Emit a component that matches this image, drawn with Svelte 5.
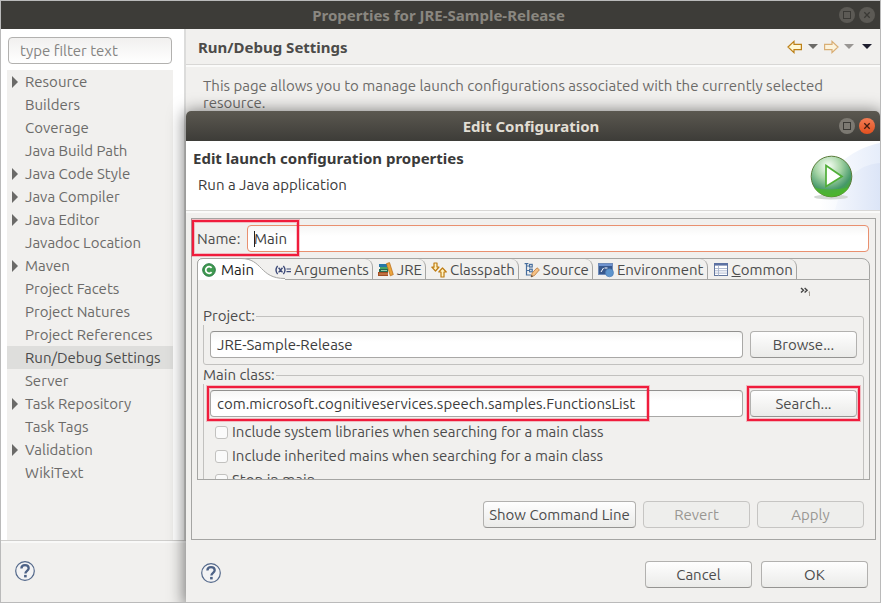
<script>
  const tree = [
    { label: 'Resource', branch: true },
    { label: 'Builders' },
    { label: 'Coverage' },
    { label: 'Java Build Path' },
    { label: 'Java Code Style', branch: true },
    { label: 'Java Compiler', branch: true },
    { label: 'Java Editor', branch: true },
    { label: 'Javadoc Location' },
    { label: 'Maven', branch: true },
    { label: 'Project Facets' },
    { label: 'Project Natures' },
    { label: 'Project References' },
    { label: 'Run/Debug Settings' },
    { label: 'Server' },
    { label: 'Task Repository', branch: true },
    { label: 'Task Tags' },
    { label: 'Validation', branch: true },
    { label: 'WikiText' }
  ];
  const tabs = ['Arguments', 'JRE', 'Classpath', 'Source', 'Environment', 'Common'];

  let selected = $state('Run/Debug Settings');
  let activeTab = $state('Main');
  let name = $state('Main');
  let project = $state('JRE-Sample-Release');
  let mainClass = $state('com.microsoft.cognitiveservices.speech.samples.FunctionsList');
  let filter = $state('');
</script>

{#snippet windowButtons(active)}
  <div class="wm">
    <button class="wm-btn" class:lit={active} aria-label="Maximize">
      <svg viewBox="0 0 16 16"><rect x="4.5" y="4.5" width="7" height="7" fill="none" stroke="currentColor" /></svg>
    </button>
    <button class="wm-btn" class:close={active} aria-label="Close">
      <svg viewBox="0 0 16 16"><path d="M5.3 5.3l5.4 5.4M10.7 5.3l-5.4 5.4" fill="none" stroke="currentColor" stroke-width="1.3" /></svg>
    </button>
  </div>
{/snippet}

{#snippet help()}
  <button class="help" aria-label="Help">
    <svg viewBox="0 0 20 20">
      <circle cx="10" cy="10" r="9.3" fill="#f3f3f4" stroke="#53688a" stroke-width="1.2" />
      <path d="M6.4 7.6C6.4 5.2 8 4.2 10 4.2c2.2 0 3.7 1.2 3.7 3.1 0 2.6-3.3 2.6-3.3 5.2" fill="none" stroke="#4d6286" stroke-width="2.3" />
      <rect x="9.1" y="13.9" width="2.6" height="2.5" fill="#4d6286" />
    </svg>
  </button>
{/snippet}

{#snippet tabIcon(kind)}
  <svg class="ticon" viewBox="0 0 16 16" aria-hidden="true">
    {#if kind === 'Arguments'}
      <g fill="none" stroke="#3d4a78" stroke-width="1.4">
        <path d="M2.6 3.8Q-.6 8 2.6 12.2M8.4 3.8Q11.6 8 8.4 12.2M3.6 5.8l3.9 4.6M7.5 5.8l-3.9 4.6" />
        <path d="M11.5 7h4.5M11.5 9.6h4.5" stroke-width="1.1" />
      </g>
    {:else if kind === 'JRE'}
      <path d="M1 2h8v3H1z" fill="#2677a8" /><path d="M2 5h8v2H2z" fill="#48a465" />
      <path d="M1 7h9v3H1z" fill="#246b50" /><path d="M3 8.5h6" stroke="#9ad0b0" />
      <path d="M0 10h10v4H0z" fill="#a24e24" /><path d="M1 12h9" stroke="#dc9560" />
      <path d="M8.5 1.6l3-1 3.8 12-3 1.2z" fill="#eda53c" stroke="#b66a15" stroke-width=".7" />
    {:else if kind === 'Classpath'}
      <g fill="#fff3c4" stroke="#bf7c12" stroke-width="1.2" stroke-linejoin="round">
        <path d="M3 1h3v4h2L4.5 9 .8 5.2H3z" /><path d="M10 15v-5H7.8L11.5 6l3.8 4H13v5z" />
      </g>
    {:else if kind === 'Source'}
      <g fill="none" stroke="#486f9e" stroke-width="1.2">
        <path d="M2.5 1v12H7M2.5 4H5M2.5 8.5H5" /><rect x="5.6" y="2.4" width="2.6" height="2.6" /><rect x="5.6" y="7.2" width="2.6" height="2.6" />
        <path d="M.6 1.6h3.8" />
      </g>
      <path d="M7 15l1.2-4L13 5.8l2.4 2L10.6 13.4z" fill="#f5c185" stroke="#b8793b" stroke-width=".8" />
      <path d="M7 15l.6-2 1.6 1.2z" fill="#444" />
    {:else if kind === 'Environment'}
      <rect x=".5" y="1.5" width="14" height="11" fill="#38588d" stroke="#6f8bb8" />
      <path d="M1 2h13v2H1z" fill="#6f93cf" /><path d="M3 10l2.5-4M6.5 6h3" stroke="#fff" fill="none" />
      <circle cx="11.5" cy="10.8" r="4" fill="#5d94cc" stroke="#4a7db6" stroke-width=".7" />
    {:else}
      <rect x="1.5" y="1.5" width="13" height="12" fill="#fff" stroke="#63779e" />
      <path d="M1 1h14v2.6H1z" fill="#5c71a2" />
      <path d="M5.5 3.5v10M2 6.5h12M2 8.8h12M2 11.1h12" stroke="#a9b4cc" stroke-width=".9" fill="none" />
    {/if}
  </svg>
{/snippet}

<div class="window">
  <header class="titlebar">
    <h1>Properties for JRE-Sample-Release</h1>
    {@render windowButtons(false)}
  </header>

  <div class="columns">
    <aside>
      <div class="nav">
        <input class="filter" type="text" placeholder="type filter text" aria-label="Filter" bind:value={filter} />
        <ul class="tree">
          {#each tree as item}
            <li>
              <button class:selected={selected === item.label} onclick={() => (selected = item.label)}>
                <span class="twist" class:branch={item.branch}></span>{item.label}
              </button>
            </li>
          {/each}
        </ul>
      </div>
      <div class="aside-foot">{@render help()}</div>
    </aside>

    <main>
      <div class="page-head">
        <h2>Run/Debug Settings</h2>
        <div class="history">
          <button aria-label="Back"><svg width="16" height="14" viewBox="0 0 16 14"><path d="M1 7l6-5.6v3h7.4v5.2H7v3z" fill="#fff8d4" stroke="#bd8118" stroke-width="1.2" /></svg></button>
          <button aria-label="Back history"><svg width="10" height="6" viewBox="0 0 10 6"><path d="M0 0h10L5 5z" fill="#6c6a67" /></svg></button>
          <button aria-label="Forward"><svg width="16" height="14" viewBox="0 0 16 14"><path d="M15 7L9 1.4v3H1.6v5.2H9v3z" fill="#fcf3dc" stroke="#d9ae74" stroke-width="1.2" /></svg></button>
          <button aria-label="Forward history"><svg width="10" height="6" viewBox="0 0 10 6"><path d="M0 0h10L5 5z" fill="#999693" /></svg></button>
          <button aria-label="View menu"><svg width="10" height="6" viewBox="0 0 10 6"><path d="M0 0h10L5 5z" fill="#1e1e2e" /></svg></button>
        </div>
      </div>
      <p>This page allows you to manage launch configurations associated with the currently selected resource.</p>
    </main>
  </div>

  <section class="dialog" role="dialog" aria-labelledby="dlg-title">
    <header class="titlebar active">
      <h1 id="dlg-title">Edit Configuration</h1>
      {@render windowButtons(true)}
    </header>

    <div class="banner">
      <div>
        <h2>Edit launch configuration properties</h2>
        <p>Run a Java application</p>
      </div>
      <svg class="run" width="75" height="69" viewBox="0 0 75 69" aria-hidden="true">
        <defs>
          <radialGradient id="ball" cx=".42" cy=".25" r=".8">
            <stop offset="0" stop-color="#fafff8" /><stop offset=".4" stop-color="#a5d4a5" />
            <stop offset=".75" stop-color="#46986a" /><stop offset="1" stop-color="#40b41c" />
          </radialGradient>
          <linearGradient id="sky"><stop offset=".2" stop-color="#fff" /><stop offset="1" stop-color="#e6edfa" /></linearGradient>
          <linearGradient id="sky2"><stop offset="0" stop-color="#f4f7fd" /><stop offset="1" stop-color="#dce5f7" /></linearGradient>
        </defs>
        <path d="M0 69C20 30 45 8 75 2v67z" fill="url(#sky)" />
        <path d="M30 69C38 38 52 24 75 22v47z" fill="url(#sky2)" />
        <ellipse cx="26" cy="56" rx="17" ry="2.5" fill="#d2d8d4" />
        <circle cx="26.5" cy="35.5" r="20.3" fill="url(#ball)" stroke="#5b7c3b" />
        <path d="M9 46.500c10 3 25 2 35 0-8 12-26 13-35 0z" fill="#4fb928" opacity=".7" />
        <path d="M21 24.500l16 11-16 10z" fill="#fff" stroke="#50ae38" stroke-width="1.7" />
      </svg>
    </div>

    <div class="body">
      <div class="panel">
        <div class="name-row">
          <label for="cfg-name">Name:</label>
          <input id="cfg-name" class="field invalid" type="text" bind:value={name} />
          <span class="caret"></span>
          <span class="mark mark-name"></span>
        </div>

        <div class="folder">
          <div class="tabs" role="tablist">
            <button class="tab main" role="tab" aria-selected={activeTab === 'Main'} onclick={() => (activeTab = 'Main')}>
              <svg class="curve" width="90" height="22" viewBox="0 0 90 22" aria-hidden="true">
                <path d="M.5 22V6Q.5.5 6 .5H44C66 .5 62 20.5 88 20.5V22z" fill="#fff" />
                <path d="M.5 22V6Q.5.5 6 .5H44C66 .5 62 20.5 88 20.5" fill="none" stroke="#a5a5a3" />
              </svg>
              <svg class="cicon" viewBox="0 0 14 14" aria-hidden="true">
                <circle cx="7" cy="7" r="6.3" fill="#3f9a50" stroke="#2b7a46" />
                <path d="M9.6 4.9A3.3 3.3 0 1 0 9.6 9.1" fill="none" stroke="#fff" stroke-width="1.7" />
              </svg>
              <span>Main</span>
            </button>
            {#each tabs as tab}
              <button class="tab" role="tab" aria-selected={activeTab === tab} onclick={() => (activeTab = tab)}>
                {@render tabIcon(tab)}
                <span>{#if tab === 'Common'}<u>C</u>ommon{:else}{tab}{/if}</span>
              </button>
            {/each}
          </div>

          <div class="sheet">
            <div class="overflow">
              <button aria-label="Show more tabs">
                <svg width="12" height="10" viewBox="0 0 12 10"><path d="M1 1l2.5 2.3L1 5.6M4.6 1l2.5 2.3-2.5 2.3" fill="none" stroke="#444" stroke-width="1.4" /><path d="M9.5 4.5v4.5M8.5 5.2h1" stroke="#a39a90" fill="none" /></svg>
              </button>
            </div>
            <fieldset>
              <legend>Project:</legend>
              <div class="row">
                <input class="field" type="text" aria-label="Project" bind:value={project} />
                <button class="btn">Browse...</button>
              </div>
            </fieldset>
            <fieldset>
              <legend>Main class:</legend>
              <div class="row">
                <input class="field" type="text" aria-label="Main class" bind:value={mainClass} />
                <button class="btn">Search...</button>
                <span class="mark mark-class"></span>
                <span class="mark mark-search"></span>
              </div>
              <label class="check"><input type="checkbox" />Include system libraries when searching for a main class</label>
              <label class="check"><input type="checkbox" />Include inherited mains when searching for a main class</label>
              <label class="check"><input type="checkbox" />Stop in main</label>
            </fieldset>
          </div>
        </div>

        <div class="actions">
          <button class="btn wide">Show Command Line</button>
          <button class="btn" disabled>Revert</button>
          <button class="btn" disabled>Apply</button>
        </div>
      </div>

      <footer>
        {@render help()}
        <div class="choices">
          <button class="btn">Cancel</button>
          <button class="btn">OK</button>
        </div>
      </footer>
    </div>
  </section>
</div>

<style>
  :global(body) { margin: 0; }
  .window, .window * { box-sizing: border-box; }
  .window {
    position: relative;
    display: flex;
    flex-direction: column;
    height: 100vh;
    min-height: 480px;
    border: 1px solid #bababa;
    background: #f1f0ee;
    color: #4c4c4c;
    font: 15px/18px Ubuntu, "Noto Sans", sans-serif;
    overflow: hidden;
  }
  button, input { font: inherit; color: inherit; margin: 0; }
  button { padding: 0; border: 0; background: none; }
  h1, h2, p, ul { margin: 0; padding: 0; }
  h1, h2 { font: 700 15px/18px "Noto Sans", sans-serif; }
  svg { display: block; }

  .titlebar {
    position: relative;
    flex: none;
    display: flex;
    align-items: center;
    justify-content: center;
    height: 28px;
    padding-right: 4px;
    background: #3d3c38;
    color: #8a8780;
  }
  .titlebar.active {
    height: 30px;
    border-radius: 5px 5px 0 0;
    background: linear-gradient(#5b5850, #3d3c38);
    color: #e2ded4;
  }
  .wm { position: absolute; right: 5px; display: flex; gap: 4px; }
  .wm-btn {
    width: 16px;
    height: 16px;
    border-radius: 50%;
    background: #5c5a55;
    color: #3a3935;
  }
  .wm-btn.lit { background: #7c7972; }
  .wm-btn.close { background: linear-gradient(#f37c54, #e2501f); color: #3f1c10; }

  .columns { flex: 1; display: flex; min-height: 0; }
  aside { flex: none; width: 185px; display: flex; flex-direction: column; }
  .nav {
    flex: 1;
    min-height: 0;
    display: flex;
    flex-direction: column;
    gap: 6px;
    padding: 8px 11px 0 6px;
    background: #fff;
    border-right: 2px solid #dcdcdb;
    color: #6c6b69;
  }
  .filter {
    height: 27px;
    margin: 0 1px;
    padding: 0 11px;
    border: 1px solid #b2b1af;
    border-radius: 4px;
    background: linear-gradient(#f1f0ef, #fff);
  }
  .filter::placeholder { color: #858482; opacity: 1; }
  .tree { flex: 1; overflow: hidden; list-style: none; background: #f1f0ee; }
  .tree button { display: flex; align-items: center; width: 100%; height: 23px; text-align: left; white-space: nowrap; }
  .tree .selected { background: #dededc; color: #4a4a4a; }
  .twist { flex: none; width: 13px; height: 12px; margin-left: 5px; }
  .branch::before {
    content: "";
    display: block;
    border: solid transparent;
    border-width: 6px 0 6px 6px;
    width: 0;
    border-left-color: #6b6a68;
  }
  .aside-foot {
    flex: none;
    height: 62px;
    padding: 20px 14px;
    border-top: 1px solid #cfcecc;
    box-shadow: inset 0 2px #f9f9f8;
  }
  .help, .help svg { width: 20px; height: 20px; }

  main { flex: 1; min-width: 0; color: #6c6b69; }
  main h2 { color: #4c4b49; }
  main p { padding: 12px 40px 0 17px; line-height: 17px; }
  .page-head {
    display: flex;
    align-items: center;
    justify-content: space-between;
    height: 36px;
    padding: 0 8px 0 12px;
    border-bottom: 1px solid #d8d7d5;
    box-shadow: 0 2px #fafaf9;
  }
  .history { display: flex; align-items: center; gap: 5px; }
  .history button:last-child { margin-left: 3px; }

  .dialog {
    position: absolute;
    inset: 110px 0 0 185px;
    display: flex;
    flex-direction: column;
    border-radius: 5px 5px 0 0;
    background: #f1f0ee;
    box-shadow: 0 2px 16px 2px rgba(0, 0, 0, 0.5);
  }
  .banner {
    flex: none;
    display: flex;
    justify-content: space-between;
    height: 70px;
    border-bottom: 1px solid #d8d7d5;
    background: #fff;
    color: #3a3a3a;
    box-shadow: 0 2px #fafaf9;
    white-space: nowrap;
  }
  .banner h2 { padding: 8px 0 0 7px; }
  .banner p { padding: 9px 0 0 12px; }
  .run { flex: none; }

  .body { flex: 1; min-height: 0; display: flex; flex-direction: column; padding: 7px 4px 0 5px; }
  .panel {
    flex: 1;
    min-height: 0;
    display: flex;
    flex-direction: column;
    padding: 6px 5px 10px;
    border: 1px solid #a5a5a3;
  }
  .name-row { position: relative; flex: none; display: flex; align-items: center; gap: 6px; height: 27px; padding-right: 1px; }
  .name-row label { width: 44px; white-space: nowrap; }
  .field {
    flex: 1;
    min-width: 0;
    height: 27px;
    padding: 0 6px;
    border: 1px solid #a9a8a6;
    border-top-color: #92918f;
    border-radius: 4px;
    background: linear-gradient(#f6f6f5, #fff 40%);
    color: #3c3c3c;
    outline: none;
  }
  .invalid { border-color: #e9906f; }
  .caret { position: absolute; left: 57px; top: 6px; width: 1px; height: 16px; background: #222; }
  .mark {
    position: absolute;
    border: 2px solid #f01c3c;
    box-shadow: 0 0 0 1px rgba(240, 28, 60, 0.25), inset 0 0 0 1px rgba(240, 28, 60, 0.25);
    pointer-events: none;
  }
  .mark-name { left: -5px; top: -5px; width: 107px; height: 36px; }
  .mark-class { left: -3px; right: 208px; top: -4px; height: 35px; }
  .mark-search { right: -3px; width: 113px; top: -4px; height: 35px; }

  .folder { flex: 1; min-height: 0; display: flex; flex-direction: column; margin-top: 6px; }
  .tabs {
    flex: none;
    display: flex;
    height: 22px;
    border: 1px solid #a5a5a3;
    border-radius: 6px 8px 0 0;
  }
  .tab {
    display: flex;
    align-items: center;
    gap: 3px;
    height: 20px;
    padding: 1px 3px 0 5px;
    border-right: 1px solid #a5a5a3;
    border-top-right-radius: 8px;
    white-space: nowrap;
  }
  .tab.main { position: relative; width: 72px; padding-left: 4px; gap: 5px; border: 0; color: #1c1c1c; }
  .curve { position: absolute; left: -1px; top: -1px; }
  .cicon { position: relative; width: 14px; height: 14px; }
  .tab span { position: relative; }
  .ticon { flex: none; width: 16px; height: 16px; }

  .sheet { flex: 1; min-height: 0; overflow: hidden; padding: 0 5px; border: solid #a5a5a3; border-width: 0 1px 1px; }
  .overflow { display: flex; justify-content: flex-end; height: 27px; padding: 7px 52px 0 0; }
  .overflow button { height: 10px; }
  fieldset {
    min-width: 0;
    margin: 0 0 1px;
    padding: 6px 6px 6px 6px;
    border: 1px solid #c2c1bf;
    border-radius: 3px;
  }
  legend { margin-left: -7px; padding: 0 1px 0 0; background: #f1f0ee; }
  .row { position: relative; display: flex; gap: 7px; }
  .check { display: flex; align-items: center; gap: 4px; height: 24px; padding-left: 5px; white-space: nowrap; }
  .row + .check { margin-top: 3px; }
  .check input {
    appearance: none;
    width: 13px;
    height: 13px;
    border: 1px solid #c2c1bf;
    border-radius: 3px;
    background: #fafafa;
  }

  .btn {
    flex: none;
    width: 107px;
    height: 27px;
    border: 1px solid #b2b1af;
    border-bottom-color: #959492;
    border-radius: 4px;
    background: linear-gradient(#fefefe, #ebebe9);
    white-space: nowrap;
  }
  .btn.wide { width: 153px; }
  .btn:disabled { border-color: #c6c5c3; background: #eeeeec; color: #999793; }
  .actions { flex: none; display: flex; justify-content: flex-end; gap: 7px; padding: 21px 6px 0 0; }
  .panel { padding-bottom: 11px; }
  footer { flex: none; display: flex; justify-content: space-between; align-items: flex-start; height: 62px; padding: 21px 8px 0 10px; }
  footer > :global(.help) { margin-top: 2px; }
  .choices { display: flex; gap: 9px; }
</style>
